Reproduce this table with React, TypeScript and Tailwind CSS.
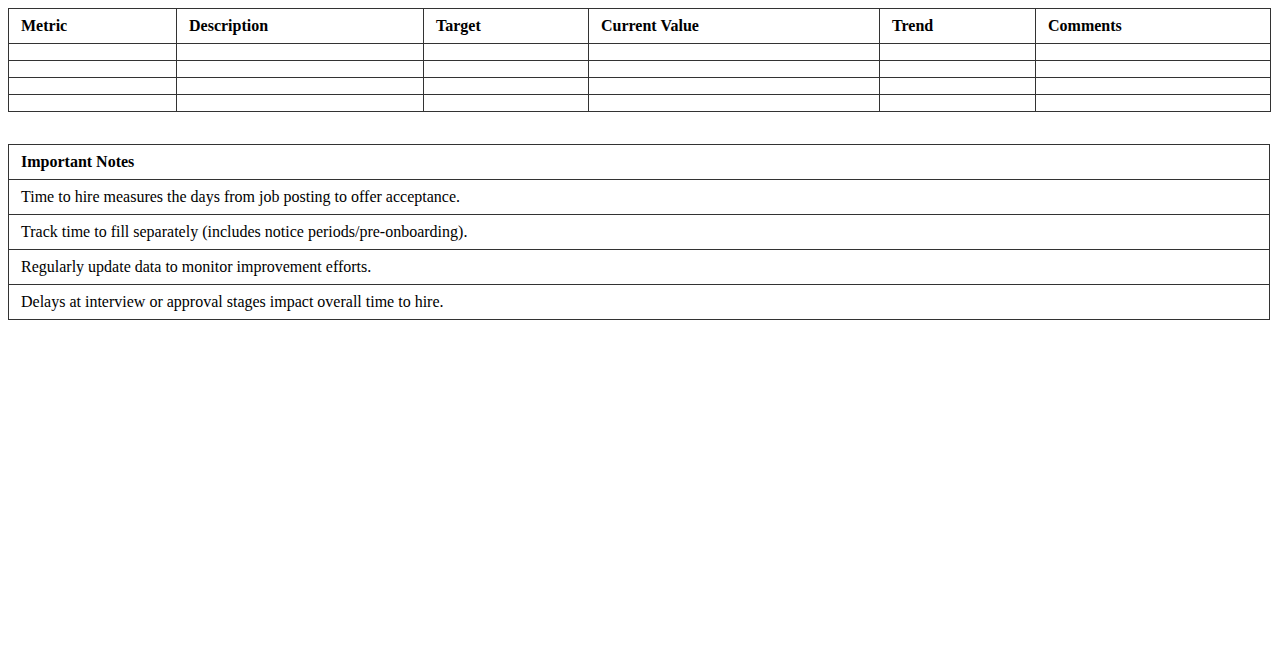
import React from "react";

const columns = [
  { label: "Metric", width: "w-[168px]" },
  { label: "Description", width: "w-[247px]" },
  { label: "Target", width: "w-[165px]" },
  { label: "Current Value", width: "w-[291px]" },
  { label: "Trend", width: "w-[156px]" },
  { label: "Comments", width: "w-[235px]" },
];

const notes = [
  "Time to hire measures the days from job posting to offer acceptance.",
  "Track time to fill separately (includes notice periods/pre-onboarding).",
  "Regularly update data to monitor improvement efforts.",
  "Delays at interview or approval stages impact overall time to hire.",
];

export default function App() {
  return (
    <div className="min-h-[650px] bg-white p-2 text-black font-['Liberation_Serif','Times_New_Roman',serif] text-base">
      <table className="w-full table-fixed border-collapse mb-8">
        <colgroup>
          {columns.map((c) => (
            <col key={c.label} className={c.width} />
          ))}
        </colgroup>
        <thead>
          <tr>
            {columns.map((c) => (
              <th
                key={c.label}
                className="border border-[#333] px-3 py-2 text-left font-bold leading-[18px]"
              >
                {c.label}
              </th>
            ))}
          </tr>
        </thead>
        <tbody>
          {[0, 1, 2, 3].map((r) => (
            <tr key={r}>
              {columns.map((c) => (
                <td key={c.label} className="border border-[#333] px-3 py-2"></td>
              ))}
            </tr>
          ))}
        </tbody>
      </table>

      <table className="w-full border-collapse">
        <thead>
          <tr>
            <th className="border border-[#333] px-3 py-2 text-left font-bold leading-[18px]">
              Important Notes
            </th>
          </tr>
        </thead>
        <tbody>
          {notes.map((n) => (
            <tr key={n}>
              <td className="border border-[#333] px-3 py-2 leading-[18px]">{n}</td>
            </tr>
          ))}
        </tbody>
      </table>
    </div>
  );
}
